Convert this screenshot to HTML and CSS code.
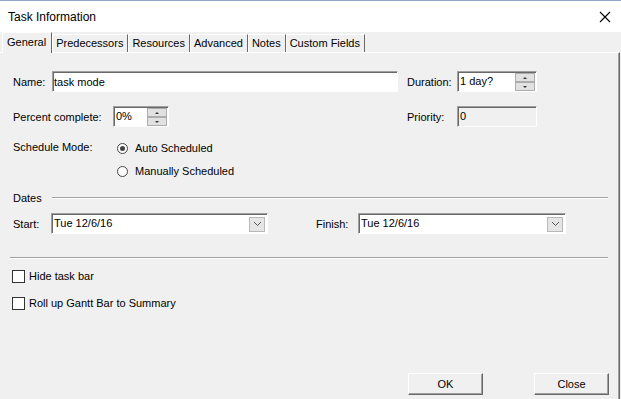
FILE: index.html
```html
<!DOCTYPE html>
<html>
<head>
<meta charset="utf-8">
<link rel="stylesheet" href="styles.css">
</head>
<body>
<div class="window">
  <div class="titlebar">
    <span class="title">Task Information</span>
    <svg class="close" width="12" height="12" viewBox="0 0 12 12"><path d="M1 1 L11 11 M11 1 L1 11" stroke="#000" stroke-width="1.1" fill="none"/></svg>
  </div>
  <div class="tabs">
    <div class="tab active">General</div>
    <div class="tab">Predecessors</div>
    <div class="tab">Resources</div>
    <div class="tab">Advanced</div>
    <div class="tab">Notes</div>
    <div class="tab">Custom Fields</div>
  </div>
  <div class="panel">
    <div class="row r1">
      <div class="left">
        <span class="lbl w-name">Name:</span>
        <div class="field name-field">task mode</div>
      </div>
      <div class="right">
        <span class="lbl w-right">Duration:</span>
        <div class="field spin w80">
          <span class="val">1 day?</span>
          <div class="spinbtns"><div class="sb up"><i></i></div><div class="sb down"><i></i></div></div>
        </div>
      </div>
    </div>
    <div class="row r2">
      <div class="left">
        <span class="lbl w-pct">Percent complete:</span>
        <div class="field spin w56">
          <span class="val">0%</span>
          <div class="spinbtns"><div class="sb up"><i></i></div><div class="sb down"><i></i></div></div>
        </div>
      </div>
      <div class="right">
        <span class="lbl w-right">Priority:</span>
        <div class="field disabled w80"><span class="val">0</span></div>
      </div>
    </div>
    <div class="sched">
      <span class="lbl w-sched">Schedule Mode:</span>
      <div class="radios">
        <div class="radio-row"><span class="radio checked"></span><span>Auto Scheduled</span></div>
        <div class="radio-row"><span class="radio"></span><span>Manually Scheduled</span></div>
      </div>
    </div>
    <div class="dates-head">
      <span>Dates</span>
      <div class="etched"></div>
    </div>
    <div class="row r3">
      <span class="lbl w-start">Start:</span>
      <div class="field combo w217"><span class="val">Tue 12/6/16</span><span class="dd"><svg width="9" height="6" viewBox="0 0 9 6"><path d="M1 1 L4.5 4.5 L8 1" stroke="#555" stroke-width="1" fill="none"/></svg></span></div>
      <span class="lbl w-finish">Finish:</span>
      <div class="field combo w208"><span class="val">Tue 12/6/16</span><span class="dd"><svg width="9" height="6" viewBox="0 0 9 6"><path d="M1 1 L4.5 4.5 L8 1" stroke="#555" stroke-width="1" fill="none"/></svg></span></div>
    </div>
    <div class="etched sep"></div>
    <div class="check-row c1"><span class="check"></span><span>Hide task bar</span></div>
    <div class="check-row c2"><span class="check"></span><span>Roll up Gantt Bar to Summary</span></div>
    <div class="buttons">
      <div class="btn">OK</div>
      <div class="btn">Close</div>
    </div>
  </div>
</div>
</body>
</html>
```
FILE: styles.css
```css
* { box-sizing: border-box; }
html, body { margin: 0; padding: 0; }
body {
  width: 621px;
  height: 399px;
  overflow: hidden;
  background: #f0f0f0;
  font-family: "Liberation Sans", Arial, sans-serif;
  font-size: 11px;
  color: #000;
}
.window { width: 621px; height: 399px; display: flex; flex-direction: column; }
.titlebar {
  height: 32px;
  flex: 0 0 32px;
  background: #fff;
  border-top: 1px solid #8fa6c6;
  display: flex;
  align-items: center;
  justify-content: space-between;
  padding: 0 10px 0 8px;
}
.title { font-size: 12px; color: #000; }
.close { display: block; }
.tabs {
  height: 20px;
  flex: 0 0 20px;
  display: flex;
  align-items: flex-end;
  padding-left: 2px;
  position: relative;
  z-index: 2;
}
.tab {
  height: 18px;
  padding: 0 4px 0 3px;
  line-height: 17px;
  border-left: 1px solid #fff;
  border-top: 1px solid #fff;
  border-right: 1px solid #696969;
  background: #f0f0f0;
  white-space: nowrap;
}
.tab.active {
  height: 21px;
  margin-bottom: -1px;
  line-height: 18px;
  padding: 0 5px 0 4px;
  border-right: 1px solid #696969;
}
.panel {
  flex: 1 1 auto;
  border-top: 1px solid #fff;
  border-right: 1px solid #696969;
  box-shadow: inset -1px 0 0 #a0a0a0;
  width: 620px;
  padding: 0 11px 4px 13px;
  display: flex;
  flex-direction: column;
}
.row { display: flex; align-items: center; height: 21px; }
.r1 { margin-top: 18px; }
.r2 { margin-top: 14px; }
.left { flex: 0 0 394px; display: flex; align-items: center; }
.right { display: flex; align-items: center; }
.lbl { flex: 0 0 auto; white-space: nowrap; }
.w-name { width: 39px; }
.w-right { width: 50px; }
.w-pct { width: 100px; }
.w-sched { width: 104px; padding-top: 3px; }
.w-start { width: 38px; }
.w-finish { width: 42px; margin-left: 48px; }
.field {
  height: 21px;
  background: #fff;
  border: 1px solid;
  border-color: #a0a0a0 #fff #fff #a0a0a0;
  box-shadow: inset 1px 1px 0 #696969;
  padding: 0 0 0 1px;
  display: flex;
  align-items: center;
  white-space: nowrap;
}
.name-field { width: 346px; }
.w80 { width: 80px; }
.w56 { width: 56px; }
.w217 { width: 217px; }
.w208 { width: 208px; }
.field .val { flex: 1 1 auto; padding-left: 1px; padding-bottom: 1px; }
.disabled { background: #f0f0f0; }
.spin { padding-right: 1px; }
.spinbtns {
  width: 20px;
  height: 19px;
  display: flex;
  flex-direction: column;
  justify-content: space-between;
  padding: 1px 0 0 0;
}
.sb {
  height: 9px;
  background: #e1e1e1;
  border: 1px solid #adadad;
  display: flex;
  align-items: center;
  justify-content: center;
}
.sb i { display: block; width: 0; height: 0; border-left: 2px solid transparent; border-right: 2px solid transparent; }
.sb.up i { border-bottom: 2px solid #333; }
.sb.down i { border-top: 2px solid #333; }
.sched { display: flex; align-items: flex-start; margin-top: 11px; }
.radios { display: flex; flex-direction: column; gap: 3px; }
.radio-row { height: 20px; display: flex; align-items: center; gap: 7px; }
.radio {
  width: 11px;
  height: 11px;
  border: 1px solid #444;
  border-radius: 50%;
  background: #fff;
  display: flex;
  align-items: center;
  justify-content: center;
}
.radio.checked::after {
  content: "";
  width: 5px;
  height: 5px;
  border-radius: 50%;
  background: #444;
}
.dates-head { display: flex; align-items: center; height: 16px; margin-top: 9px; }
.dates-head span { width: 39px; }
.dates-head .etched { flex: 1 1 auto; }
.etched { height: 2px; border-top: 1px solid #a0a0a0; border-bottom: 1px solid #fff; }
.r3 { margin-top: 7px; }
.combo { padding-right: 2px; }
.dd {
  width: 16px;
  height: 15px;
  background: #e5e5e5;
  border: 1px solid #b8b8b8;
  display: flex;
  align-items: center;
  justify-content: center;
  margin-top: 1px;
}
.dd svg { display: block; }
.sep { margin-top: 23px; margin-left: -3px; width: 598px; }
.check-row { display: flex; align-items: center; height: 18px; gap: 4px; margin-left: -1px; }
.c1 { margin-top: 8px; }
.c2 { margin-top: 9px; }
.check { width: 13px; height: 13px; border: 1px solid #333; background: #fff; }
.buttons {
  margin-top: auto;
  margin-right: -1px;
  display: flex;
  justify-content: flex-end;
  gap: 51px;
}
.btn {
  width: 75px;
  height: 22px;
  border: 1px solid;
  border-color: #fff #696969 #696969 #fff;
  box-shadow: inset -1px -1px 0 #a0a0a0;
  background: #f0f0f0;
  display: flex;
  align-items: center;
  justify-content: center;
  padding-bottom: 1px;
}
```
